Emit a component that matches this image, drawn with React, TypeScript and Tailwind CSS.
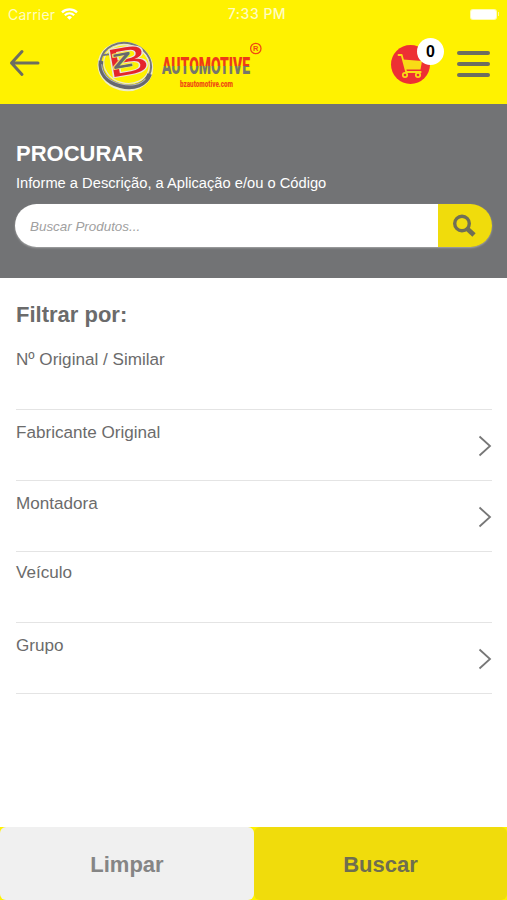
const filters = [
  { label: 'Nº Original / Similar', hasOptions: false, padding: 'pt-[9px]' },
  { label: 'Fabricante Original', hasOptions: true, padding: 'pt-[11px]' },
  { label: 'Montadora', hasOptions: true, padding: 'pt-[11px]' },
  { label: 'Veículo', hasOptions: false, padding: 'pt-[9px]' },
  { label: 'Grupo', hasOptions: true, padding: 'pt-[11px]' },
]

const StatusBar = () => (
  <div className="grid h-7 grid-cols-3 items-center px-2 text-[#fffcc0]">
    <div className="flex items-center gap-1.5">
      <span className="font-['Inter','Liberation_Sans',sans-serif] text-[14px] tracking-[0.2px]">
        Carrier
      </span>
      <svg className="h-3 w-[17px]" viewBox="0 0 17 12" fill="none">
        <path d="M1 4.3C5.2.4 11.8.4 16 4.3" stroke="white" strokeWidth="2.4" />
        <path d="M3.8 7.2c2.7-2.5 6.7-2.5 9.4 0" stroke="white" strokeWidth="2.2" />
        <path d="M6 9.2a3.6 3.6 0 0 1 5 0L8.5 11.8z" fill="white" />
      </svg>
    </div>
    <span className="-mt-0.5 pl-[7px] text-center font-['Inter','Liberation_Sans',sans-serif] text-[14px] font-medium tracking-[0.5px]">
      7:33 PM
    </span>
    <div className="flex items-center justify-end">
      <div className="h-[9px] w-[25px] rounded-[2px] bg-white ring-1 ring-[#fffcb0]" />
      <div className="ml-[2px] h-1 w-px bg-[#fff9a0]" />
    </div>
  </div>
)

const Logo = () => (
  <svg className="h-[60px] w-[174px] shrink-0" viewBox="94 36 174 60">
    <defs>
      <linearGradient
        id="wordmark"
        gradientUnits="userSpaceOnUse"
        x1="0"
        y1="56"
        x2="0"
        y2="76"
      >
        <stop offset="0.48" stopColor="#ee3a17" />
        <stop offset="0.48" stopColor="#eedf52" />
        <stop offset="0.52" stopColor="#eedf52" />
        <stop offset="0.52" stopColor="#77766a" />
      </linearGradient>
    </defs>
    <g fill="none" transform="rotate(14 125.5 66)">
      <ellipse cx="125.5" cy="66.5" rx="26.5" ry="23" stroke="#eeecc8" strokeWidth="3" />
      <ellipse cx="125.5" cy="65" rx="25.5" ry="22" stroke="#77777b" strokeWidth="2" />
      <ellipse cx="126" cy="64" rx="23" ry="19" stroke="#e9e7d0" strokeWidth="1.2" />
      <path
        d="M100.5 67c1 12 11 19.5 25 19.5s24.5-7.5 25.5-18.5"
        stroke="#66676e"
        strokeWidth="4.5"
      />
      <path d="M102 70c3 10 12 14.5 23 14.5s20-4 23-11" stroke="#b9babd" />
      <path d="M101 61l10-4" stroke="#77777b" strokeWidth="1.8" />
    </g>
    <g
      transform="translate(112.5 77.5) rotate(-10)"
      fontFamily="'Liberation Sans', Arial, sans-serif"
      strokeLinejoin="round"
    >
      <text
        x="-3"
        fontSize="40"
        textLength="42"
        lengthAdjust="spacingAndGlyphs"
        fill="#e5252b"
        stroke="#e9e7dc"
        strokeWidth="2"
        paintOrder="stroke"
      >
        B
      </text>
      <text
        x="2.5"
        y="-8"
        fontSize="21"
        fontWeight="bold"
        textLength="20"
        lengthAdjust="spacingAndGlyphs"
        fill="#66686e"
        stroke="#f2ea60"
        strokeWidth="1.6"
        paintOrder="stroke"
      >
        Z
      </text>
    </g>
    <text
      x="162"
      y="74"
      fontFamily="Roboto, 'Liberation Sans', sans-serif"
      fontWeight="900"
      fontSize="24"
      textLength="88"
      lengthAdjust="spacingAndGlyphs"
      fill="url(#wordmark)"
    >
      AUTOMOTIVE
    </text>
    <text
      x="180"
      y="86.5"
      fontFamily="Roboto, 'Liberation Sans', sans-serif"
      fontWeight="900"
      fontSize="8.5"
      textLength="53"
      lengthAdjust="spacingAndGlyphs"
      fill="#f04a12"
    >
      bzautomotive.com
    </text>
    <circle cx="255.8" cy="48.5" r="5.2" fill="none" stroke="#f04a12" strokeWidth="1.3" />
    <text
      x="255.8"
      y="51.3"
      textAnchor="middle"
      fontFamily="'Liberation Sans', Arial, sans-serif"
      fontWeight="bold"
      fontSize="7.5"
      fill="#f04a12"
    >
      R
    </text>
  </svg>
)

const Cart = () => (
  <button className="relative h-[39px] w-[39px] rounded-full bg-[#ed3034]">
    <svg className="h-[39px] w-[39px]" viewBox="0 0 39 39" fill="none">
      <path
        d="M7.5 10h3.2l4.5 17h14.5"
        stroke="#f9dc16"
        strokeWidth="1.8"
        strokeLinecap="round"
        strokeLinejoin="round"
      />
      <path d="M12 14.5L31 16l-1.5 8.5h-15z" fill="#f9dc16" />
      <circle cx="14" cy="30" r="2.2" stroke="#f9dc16" strokeWidth="1.7" />
      <circle cx="27" cy="30" r="2.2" stroke="#f9dc16" strokeWidth="1.7" />
    </svg>
    <span className="absolute -top-[7px] left-[26px] flex h-[27px] w-[27px] items-center justify-center rounded-full bg-white text-[16px] font-bold text-black">
      0
    </span>
  </button>
)

const Header = () => (
  <header className="h-[104px] bg-[#fff200]">
    <StatusBar />
    <div className="flex h-[76px] items-center pb-1 pl-[9px]">
      <svg
        className="mb-0.5 h-7 w-[31px]"
        viewBox="0 0 31 28"
        fill="none"
        stroke="#6d6e60"
        strokeWidth="3"
        strokeLinecap="round"
        strokeLinejoin="round"
      >
        <path d="M29 14H2.500M13 2.500L2.500 14L13 25.500" />
      </svg>
      <div className="ml-[54px] mt-1">
        <Logo />
      </div>
      <div className="ml-[123px] mt-2">
        <Cart />
      </div>
      <button className="ml-[27px] flex w-[33px] flex-col gap-[7px]">
        <span className="h-1 rounded-full bg-[#6d6e60]" />
        <span className="h-1 rounded-full bg-[#6d6e60]" />
        <span className="h-1 rounded-full bg-[#6d6e60]" />
      </button>
    </div>
  </header>
)

const Search = () => (
  <section className="h-[174px] bg-[#727375] px-[15px] pt-9 text-white">
    <h1 className="pl-px text-[22px] font-bold leading-7">PROCURAR</h1>
    <p className="mt-[5px] pl-px text-[14.7px] leading-5">
      Informe a Descrição, a Aplicação e/ou o Código
    </p>
    <div className="mt-[11px] flex h-[43px] overflow-hidden rounded-full shadow-[0_1px_2px_#a5a6a6]">
      <input
        className="w-[423px] bg-white pl-[15px] pt-1 text-[13.4px] italic outline-none placeholder:text-[#a0a0a0]"
        placeholder="Buscar Produtos..."
      />
      <button className="flex flex-1 items-center justify-center bg-[#f0dc0c]">
        <svg className="mr-0.5 h-6 w-6" viewBox="0 0 24 24" fill="none" stroke="#706f56">
          <circle cx="10" cy="9.5" r="7.3" strokeWidth="3.4" />
          <path d="M15.500 15l6.500 6" strokeWidth="4.8" />
        </svg>
      </button>
    </div>
  </section>
)

export default function App() {
  return (
    <div className="flex h-[900px] w-[507px] flex-col overflow-hidden bg-white font-['Liberation_Sans',Arial,sans-serif]">
      <Header />
      <Search />
      <main className="flex-1 pl-4 pr-[15px] pt-[22px] text-[#6b6b6b]">
        <h2 className="mb-[9px] text-[22px] font-bold leading-[30px]">Filtrar por:</h2>
        {filters.map((filter) => (
          <div
            key={filter.label}
            className={`flex h-[71px] justify-between border-b border-[#e4e4e4] ${filter.padding}`}
          >
            <span className="text-[17.1px] leading-6">{filter.label}</span>
            {filter.hasOptions && (
              <svg
                className="mt-[14px] h-[22px] w-[14px]"
                viewBox="0 0 14 22"
                fill="none"
                stroke="#777"
                strokeWidth="1.8"
              >
                <path d="M1.500 1.500L12 11L1.500 20.500" />
              </svg>
            )}
          </div>
        ))}
      </main>
      <footer className="flex h-[73px] bg-[#fff200] pb-0 text-[22px] font-bold">
        <button className="w-[254px] rounded-[6px] bg-[#f0f0f0] pt-px text-[#858585]">
          Limpar
        </button>
        <button className="flex-1 rounded-[6px] bg-[#f0dc0c] pt-px text-[#6f6e50]">
          Buscar
        </button>
      </footer>
    </div>
  )
}
